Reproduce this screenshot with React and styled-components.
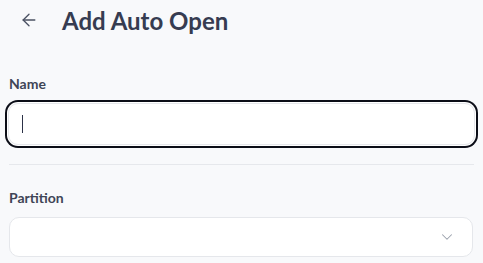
import React from "react";
import styled, { createGlobalStyle } from "styled-components";
import { ArrowLeft, ChevronDown } from "lucide-react";

const GlobalStyle = createGlobalStyle`
  body {
    margin: 0;
    background: #f8f9fb;
    font-family: Lato, "Liberation Sans", sans-serif;
  }
`;

const Page = styled.div`
  display: flex;
  flex-direction: column;
  padding: 0 9px;
`;

const Header = styled.div`
  display: flex;
  align-items: center;
  height: 40px;
  padding-left: 10px;
  gap: 23px;
`;

const BackButton = styled.button`
  display: flex;
  align-items: center;
  justify-content: center;
  border: none;
  background: transparent;
  padding: 0;
  color: #4b5263;
  cursor: pointer;
`;

const Title = styled.h1`
  margin: 0;
  font-size: 24px;
  font-weight: 700;
  line-height: 29px;
  color: #363c51;
`;

const Label = styled.label`
  display: block;
  font-size: 14px;
  font-weight: 700;
  line-height: 17px;
  color: #3f4556;
  margin-top: ${(p) => p.$top}px;
  margin-bottom: 11px;
`;

const TextInput = styled.div`
  height: 40px;
  margin: 0 -1px;
  border: 1px solid #e5e7eb;
  border-radius: 10px;
  background: #fff;
  box-shadow: 0 0 0 1px #fff, 0 0 0 3px #0b0d17;
  display: flex;
  align-items: center;
  padding-left: 13px;
`;

const Caret = styled.span`
  width: 1px;
  height: 18px;
  background: #2c3247;
`;

const Divider = styled.hr`
  border: none;
  height: 1px;
  background: #e6e8ec;
  margin: 19px 0 0;
`;

const Select = styled.div`
  height: 38px;
  margin-right: 1px;
  border: 1px solid #e5e7eb;
  border-radius: 10px;
  background: #fff;
  display: flex;
  align-items: center;
  justify-content: flex-end;
  padding-right: 16px;
  color: #9aa0ab;
`;

export default function App() {
  return (
    <Page>
      <GlobalStyle />
      <Header>
        <BackButton>
          <ArrowLeft size={20} strokeWidth={1.6} />
        </BackButton>
        <Title>Add Auto Open</Title>
      </Header>
      <Label $top={35}>Name</Label>
      <TextInput>
        <Caret />
      </TextInput>
      <Divider />
      <Label $top={24}>Partition</Label>
      <Select>
        <ChevronDown size={18} strokeWidth={1.4} />
      </Select>
    </Page>
  );
}
